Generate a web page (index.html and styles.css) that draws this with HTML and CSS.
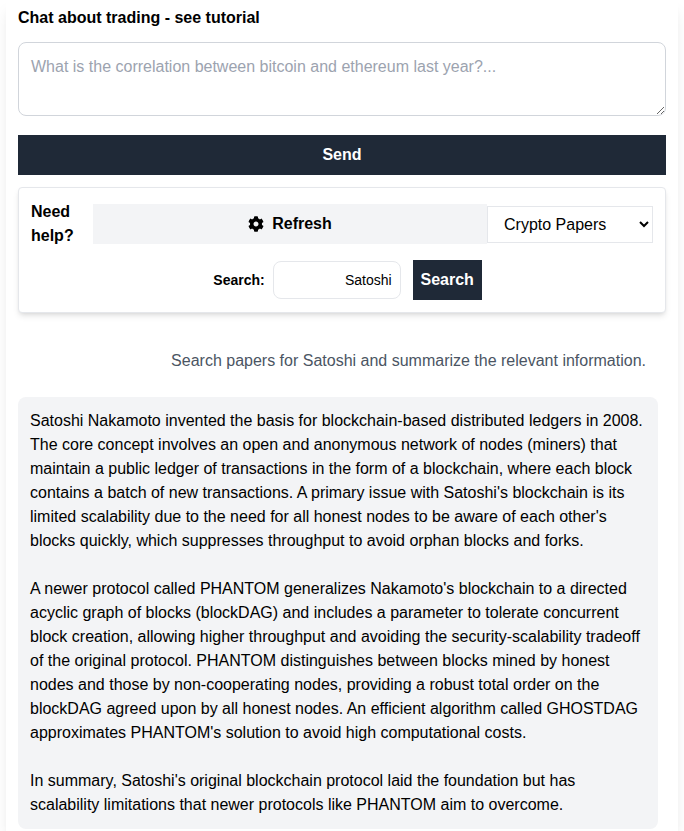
FILE: index.html
```html
<!DOCTYPE html>
<html lang="en">
<head>
<meta charset="utf-8">
<title>Chat about trading</title>
<link rel="stylesheet" href="styles.css">
</head>
<body>
<main class="page">
  <h1 class="title">Chat about trading - see tutorial</h1>
  <textarea class="prompt" placeholder="What is the correlation between bitcoin and ethereum last year?..."></textarea>
  <button class="send" type="button">Send</button>
  <section class="panel">
    <div class="panel-top">
      <div class="help">Need help?</div>
      <button class="refresh" type="button">
        <svg class="gear" viewBox="0 0 512 512" aria-hidden="true"><path d="M487.4 315.7l-42.6-24.6c4.3-23.2 4.3-47 0-70.2l42.6-24.6c4.9-2.8 7.1-8.6 5.5-14-11.1-35.6-30-67.8-54.7-94.6-3.8-4.1-10-5.1-14.8-2.3L380.8 110c-17.9-15.4-38.5-27.3-60.8-35.1V25.8c0-5.6-3.9-10.5-9.4-11.7-36.7-8.2-74.3-7.8-109.2 0-5.5 1.2-9.4 6.1-9.4 11.7V75c-22.2 7.9-42.8 19.8-60.8 35.1L88.7 85.5c-4.9-2.8-11-1.9-14.8 2.3-24.7 26.7-43.6 58.9-54.7 94.6-1.7 5.4.6 11.2 5.5 14L67.3 221c-4.3 23.2-4.3 47 0 70.2l-42.6 24.6c-4.9 2.8-7.1 8.6-5.5 14 11.1 35.6 30 67.8 54.7 94.6 3.8 4.1 10 5.1 14.8 2.3l42.6-24.6c17.9 15.4 38.5 27.3 60.8 35.1v49.2c0 5.6 3.9 10.5 9.4 11.7 36.7 8.2 74.3 7.8 109.2 0 5.5-1.2 9.4-6.1 9.4-11.7v-49.2c22.2-7.9 42.8-19.8 60.8-35.1l42.6 24.6c4.9 2.8 11 1.9 14.8-2.3 24.7-26.7 43.6-58.9 54.7-94.6 1.5-5.5-.7-11.3-5.6-14.1zM256 336c-44.1 0-80-35.9-80-80s35.9-80 80-80 80 35.9 80 80-35.9 80-80 80z"/></svg>
        <span>Refresh</span>
      </button>
      <select class="source">
        <option>Crypto Papers</option>
      </select>
    </div>
    <div class="search-row">
      <label class="search-label" for="q">Search:</label>
      <input class="search-input" id="q" type="text" value="Satoshi">
      <button class="search-btn" type="button">Search</button>
    </div>
  </section>
  <p class="user-msg">Search papers for Satoshi and summarize the relevant information.</p>
  <article class="reply">
    <p>Satoshi Nakamoto invented the basis for blockchain-based distributed ledgers in 2008. The core concept involves an open and anonymous network of nodes (miners) that maintain a public ledger of transactions in the form of a blockchain, where each block contains a batch of new transactions. A primary issue with Satoshi's blockchain is its limited scalability due to the need for all honest nodes to be aware of each other's blocks quickly, which suppresses throughput to avoid orphan blocks and forks.</p>
    <p>A newer protocol called PHANTOM generalizes Nakamoto's blockchain to a directed acyclic graph of blocks (blockDAG) and includes a parameter to tolerate concurrent block creation, allowing higher throughput and avoiding the security-scalability tradeoff of the original protocol. PHANTOM distinguishes between blocks mined by honest nodes and those by non-cooperating nodes, providing a robust total order on the blockDAG agreed upon by all honest nodes. An efficient algorithm called GHOSTDAG approximates PHANTOM's solution to avoid high computational costs.</p>
    <p>In summary, Satoshi's original blockchain protocol laid the foundation but has scalability limitations that newer protocols like PHANTOM aim to overcome.</p>
  </article>
</main>
</body>
</html>
```
FILE: styles.css
```css
* { box-sizing: border-box; }
html, body { margin: 0; padding: 0; }
body {
  height: 831px;
  overflow: hidden;
  background: #fff;
  font-family: "Liberation Sans", Arial, sans-serif;
  font-size: 16px;
  line-height: 24px;
  color: #000;
}
.page {
  width: 672px;
  height: 831px;
  margin: 0 6px;
  padding: 6px 12px 0;
  background: #fff;
  box-shadow: 0 10px 15px -3px rgba(0, 0, 0, 0.1), 0 4px 6px -4px rgba(0, 0, 0, 0.1);
  overflow: hidden;
}
.title {
  margin: 0 0 12px;
  font-size: 16px;
  line-height: 24px;
  font-weight: 700;
}
.prompt {
  display: block;
  width: 648px;
  height: 74px;
  padding: 12px;
  border: 1px solid #d1d5db;
  border-radius: 8px;
  font: inherit;
  color: #000;
  background: #fff;
}
.prompt::placeholder { color: #9ca3af; opacity: 1; }
.send {
  display: block;
  width: 100%;
  height: 40px;
  margin-top: 19px;
  border: 0;
  background: #1f2937;
  color: #fff;
  font: inherit;
  font-weight: 700;
}
.panel {
  margin-top: 12px;
  height: 126px;
  padding: 12px;
  border: 1px solid #e5e7eb;
  border-radius: 4px;
  background: #fff;
  box-shadow: 0 4px 6px -1px rgba(0, 0, 0, 0.1), 0 2px 4px -2px rgba(0, 0, 0, 0.1);
}
.panel-top { display: flex; align-items: center; }
.help { width: 62px; font-weight: 700; }
.refresh {
  display: flex;
  align-items: center;
  justify-content: center;
  gap: 8px;
  width: 394px;
  height: 40px;
  border: 0;
  background: #f3f4f6;
  color: #000;
  font: inherit;
  font-weight: 700;
}
.gear { width: 16px; height: 16px; fill: #000; }
.source {
  width: 166px;
  height: 37px;
  padding: 0 12px;
  border: 1px solid #e5e7eb;
  background: #fff;
  color: #000;
  font: inherit;
}
.search-row {
  display: flex;
  align-items: center;
  justify-content: center;
  margin-top: 12px;
  padding-left: 11px;
}
.search-label { font-size: 14px; font-weight: 700; margin-right: 8px; }
.search-input {
  width: 128px;
  height: 38px;
  padding: 0 8px;
  border: 1px solid #e5e7eb;
  border-radius: 8px;
  text-align: right;
  font: inherit;
  font-size: 14px;
  color: #000;
}
.search-btn {
  width: 69px;
  height: 40px;
  margin-left: 12px;
  border: 0;
  background: #1f2937;
  color: #fff;
  font: inherit;
  font-weight: 700;
}
.user-msg {
  margin: 36px 20px 0 0;
  text-align: right;
  color: #4b5563;
}
.reply {
  width: 640px;
  margin-top: 24px;
  padding: 12px;
  background: #f3f4f6;
  border-radius: 8px;
}
.reply p { margin: 0 0 24px; }
.reply p:last-child { margin-bottom: 0; }
```
